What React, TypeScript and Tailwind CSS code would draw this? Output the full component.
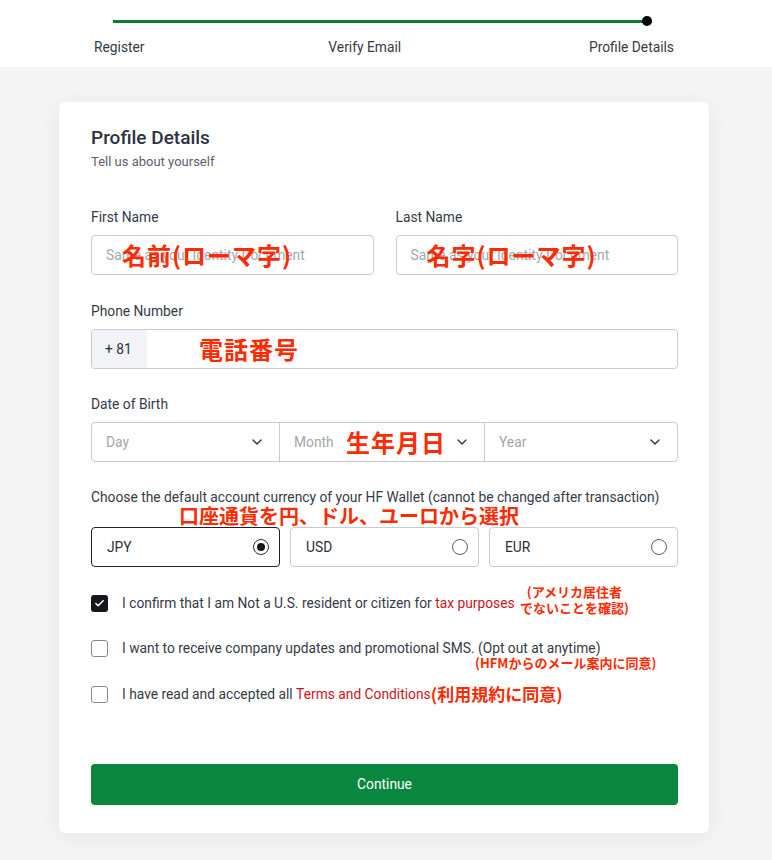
import { ChevronDown, Check } from 'lucide-react'

const jp = { fontFamily: '"Noto Sans CJK JP", sans-serif' }

function Field({ label, note }: { label: string; note: string }) {
  return (
    <div className="flex-1">
      <p className="text-[13.8px] leading-[18px] text-[#353a47]">{label}</p>
      <div className="relative mt-[9px] h-10 rounded border border-[#c9cbcf] flex items-center px-[14px]">
        <span className="text-[13.8px] text-[#a3a6ad]">Same as your Identity Document</span>
        <span
          className="absolute left-[30px] top-[4px] text-[24px] leading-[30px] font-bold text-[#ff2a00] tracking-[1px]"
          style={jp}
        >
          {note}
        </span>
      </div>
    </div>
  )
}

function Select({ label, width, last }: { label: string; width: string; last?: boolean }) {
  return (
    <div className={`${width} h-full flex items-center justify-between pl-[14px] pr-[14px] ${last ? '' : 'border-r border-[#c9cbcf]'}`}>
      <span className="text-[13.8px] text-[#a3a6ad]">{label}</span>
      <ChevronDown size={16} strokeWidth={2} className="text-[#2b2f38]" />
    </div>
  )
}

function Currency({ code, selected }: { code: string; selected?: boolean }) {
  return (
    <div
      className={`flex-1 h-10 rounded flex items-center justify-between pl-[15px] pr-[10px] border ${
        selected ? 'border-[#1f2229]' : 'border-[#c9cbcf]'
      }`}
    >
      <span className="text-[13.8px] text-[#2b2f38]">{code}</span>
      {selected ? (
        <span className="w-4 h-4 rounded-full border border-[#2b2f38] flex items-center justify-center">
          <span className="w-2 h-2 rounded-full bg-[#15171c]" />
        </span>
      ) : (
        <span className="w-4 h-4 rounded-full border border-[#5a5d64]" />
      )}
    </div>
  )
}

function Box({ checked }: { checked?: boolean }) {
  return checked ? (
    <span className="w-[17px] h-[17px] rounded-[3px] bg-[#15171c] flex items-center justify-center shrink-0">
      <Check size={11} strokeWidth={3.5} className="text-white" />
    </span>
  ) : (
    <span className="w-[17px] h-[17px] rounded-[3px] border border-[#85888e] bg-white shrink-0" />
  )
}

export default function App() {
  return (
    <div className="min-h-[860px] bg-[#f4f4f4] text-[#353a47]" style={{ fontFamily: 'Roboto, "Noto Sans CJK JP", sans-serif' }}>
      <header className="bg-white h-[67px] pt-[16px]">
        <div className="w-[580px] ml-[94px]">
          <div className="flex items-center pl-[19px] pr-[22px] h-[10px]">
            <div className="flex-1 h-[3px] bg-[#0b7d3b]" />
            <div className="w-[10px] h-[10px] rounded-full bg-black -ml-[4px]" />
          </div>
          <div className="flex justify-between mt-[12px] text-[13.8px] leading-[18px] text-[#353a47]">
            <span>Register</span>
            <span className="-ml-[4px]">Verify Email</span>
            <span>Profile Details</span>
          </div>
        </div>
      </header>

      <main className="pt-[35px] pb-[27px]">
        <div className="w-[650px] ml-[59px] bg-white rounded-md shadow-[0_4px_24px_rgba(0,0,0,0.06)] pt-[24px] pb-[28px] pl-[32px] pr-[31px]">
          <h1 className="text-[19px] leading-[24px] font-medium text-[#2d3140]">Profile Details</h1>
          <p className="mt-[4px] text-[13px] leading-[16px] text-[#5b606b]">Tell us about yourself</p>

          <div className="mt-[38px] flex gap-[22px]">
            <Field label="First Name" note="名前(ローマ字)" />
            <Field label="Last Name" note="名字(ローマ字)" />
          </div>

          <p className="mt-[27px] text-[13.8px] leading-[18px]">Phone Number</p>
          <div className="relative mt-[9px] h-10 rounded border border-[#c9cbcf] flex overflow-hidden">
            <div className="w-[55px] bg-[#f1f3f6] flex items-center pl-[13px] text-[13.8px] text-[#2b2f38]">+ 81</div>
            <span
              className="absolute left-[107px] top-[4px] text-[24px] leading-[30px] font-bold text-[#ff2a00] tracking-[1px]"
              style={jp}
            >
              電話番号
            </span>
          </div>

          <p className="mt-[26px] text-[13.8px] leading-[18px]">Date of Birth</p>
          <div className="relative mt-[9px] h-10 rounded border border-[#c9cbcf] flex">
            <Select label="Day" width="w-[188px]" />
            <Select label="Month" width="w-[205px]" />
            <Select label="Year" width="flex-1" last />
            <span
              className="absolute left-[254px] top-[4px] text-[24px] leading-[30px] font-bold text-[#ff2a00] tracking-[1px]"
              style={jp}
            >
              生年月日
            </span>
          </div>

          <div className="relative">
            <p className="mt-[26px] text-[13.8px] leading-[18px]">
              Choose the default account currency of your HF Wallet (cannot be changed after transaction)
            </p>
            <span
              className="absolute left-[88px] top-[16px] text-[20px] leading-[24px] font-bold text-[#ff2a00]"
              style={jp}
            >
              口座通貨を円、ドル、ユーロから選択
            </span>
          </div>
          <div className="mt-[21px] flex gap-[10px]">
            <Currency code="JPY" selected />
            <Currency code="USD" />
            <Currency code="EUR" />
          </div>

          <div className="mt-[26px] flex flex-col gap-[25px] text-[13.8px] leading-[20px] text-[#353a47]">
            <div className="relative flex items-center gap-[14px]">
              <Box checked />
              <span>
                I confirm that I am Not a U.S. resident or citizen for{' '}
                <span className="text-[#cf1220]">tax purposes</span>
              </span>
              <span
                className="absolute left-[429px] -top-[9px] text-[13px] leading-[16px] font-bold text-[#ff2a00] text-center"
                style={jp}
              >
                (アメリカ居住者
                <br />
                でないことを確認)
              </span>
            </div>
            <div className="relative flex items-center gap-[14px]">
              <Box />
              <span>I want to receive company updates and promotional SMS. (Opt out at anytime)</span>
              <span
                className="absolute left-[384px] top-[17px] text-[13px] leading-[16px] font-bold text-[#ff2a00]"
                style={jp}
              >
                (HFMからのメール案内に同意)
              </span>
            </div>
            <div className="flex items-center gap-[14px] mt-[1px]">
              <Box />
              <span className="flex items-center">
                I have read and accepted all&nbsp;
                <span className="text-[#cf1220]">Terms and Conditions</span>
                <span className="text-[17px] font-bold text-[#ff2a00] leading-[20px]" style={jp}>
                  (利用規約に同意)
                </span>
              </span>
            </div>
          </div>

          <button className="mt-[60px] w-full h-[41px] rounded bg-[#0a873f] text-white text-[13.8px]">
            Continue
          </button>
        </div>
      </main>
    </div>
  )
}
